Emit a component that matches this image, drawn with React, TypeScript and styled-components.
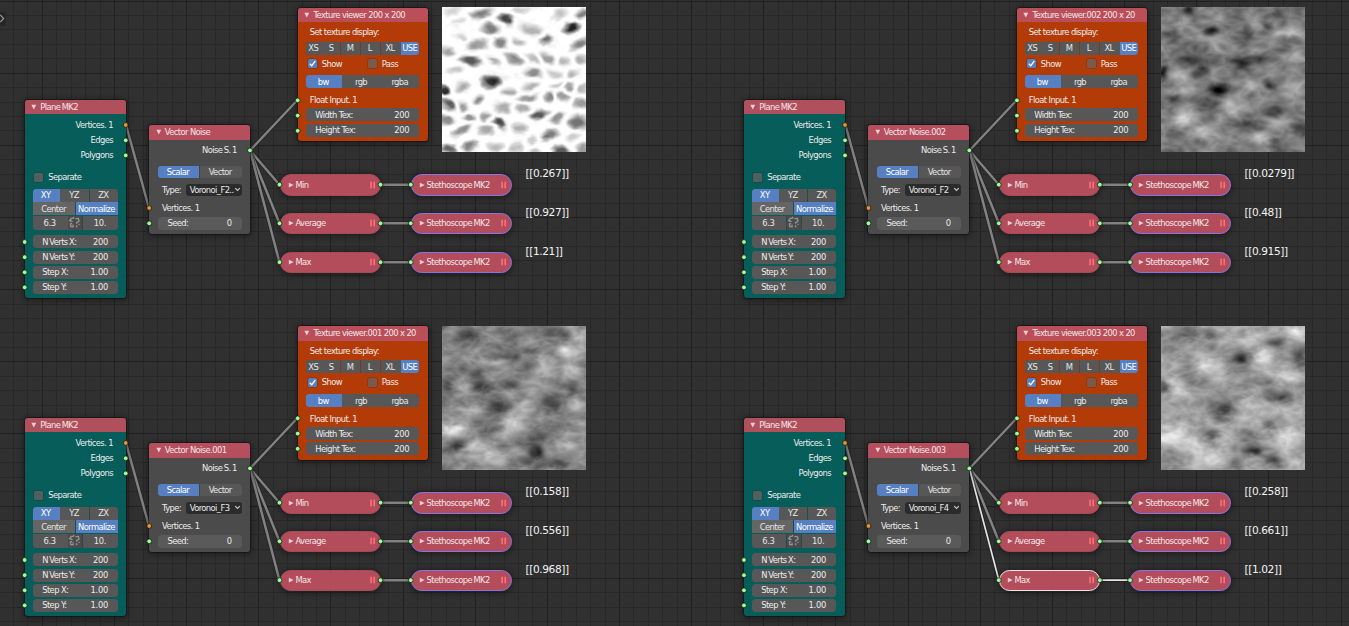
import React, { useEffect, useRef } from 'react';
import styled, { createGlobalStyle, css } from 'styled-components';

const GlobalStyle = createGlobalStyle`
  html, body { margin: 0; padding: 0; background: #303030; overflow: hidden; }
  * { box-sizing: border-box; }
`;

const RED = 'rgba(187, 79, 94, 0.95)';
const GREY = '#575757';
const BLUE = '#5680c2';
const GREEN = '#9dfd9b';
const ORANGE = '#ea9331';

const Editor = styled.main`
  position: relative;
  width: 1349px;
  height: 626px;
  overflow: hidden;
  background: #303030;
  color: #ececec;
  font: 8.4px/12px "DejaVu Sans", sans-serif;
  letter-spacing: -0.6px;
  white-space: pre;
`;

const Layer = styled.svg`
  position: absolute;
  left: 0;
  top: 0;
`;

const Place = styled.section<{ x: number; y: number; w: number }>`
  position: absolute;
  left: ${p => p.x}px;
  top: ${p => p.y}px;
  width: ${p => p.w}px;
`;

const NodeFrame = styled(Place)<{ h: number; tone: string }>`
  height: ${p => p.h}px;
  display: flex;
  flex-direction: column;
  border-radius: 3px;
  overflow: hidden;
  background: ${p => p.tone};
  box-shadow: 0 0 0 0.7px rgba(18, 18, 18, 0.75), 0 1px 6px 1px rgba(0, 0, 0, 0.45);
`;

const NodeHeader = styled.header`
  height: 14.4px;
  flex: none;
  display: flex;
  align-items: center;
  gap: 3px;
  padding-left: 6.6px;
  background: ${RED};
  color: #f4e6e8;
`;

const NodeBody = styled.div<{ left: number; right: number; top: number }>`
  display: flex;
  flex-direction: column;
  padding: ${p => p.top}px ${p => p.right}px 0 ${p => p.left}px;
`;

const Line = styled.div<{ h?: number; mt?: number; indent?: number; end?: number }>`
  height: ${p => p.h ?? 12}px;
  margin-top: ${p => p.mt ?? 0}px;
  padding-left: ${p => p.indent ?? 0}px;
  display: flex;
  align-items: center;
  ${p => p.end !== undefined && css`justify-content: flex-end; padding-right: ${p.end}px;`}
`;

const Segments = styled.div<{ mt?: number; h?: number; radius?: string }>`
  height: ${p => p.h ?? 13}px;
  margin-top: ${p => p.mt ?? 0}px;
  display: flex;
  gap: 0.7px;
  border-radius: ${p => p.radius ?? '3px'};
  overflow: hidden;
  background: rgba(60, 60, 60, 0.5);
`;

const Segment = styled.div<{ w?: number; on?: boolean; tone?: string }>`
  flex: ${p => (p.w ? `0 0 ${p.w}px` : '1 1 0')};
  display: flex;
  align-items: center;
  justify-content: center;
  padding-right: 1px;
  background: ${p => (p.on ? BLUE : p.tone ?? GREY)};
  color: ${p => (p.on ? '#fff' : '#e6e6e6')};
`;

const NumberField = styled.div<{ mt?: number; tone?: string; end?: number }>`
  height: 13px;
  margin-top: ${p => p.mt ?? 2.1}px;
  padding: 0 ${p => p.end ?? 10}px 0 9.5px;
  display: flex;
  align-items: center;
  justify-content: space-between;
  border-radius: 3.5px;
  background: ${p => p.tone ?? GREY};
`;

const Digits = styled.span`
  letter-spacing: -0.3px;
`;

const Tight = styled.span`
  word-spacing: -0.6px;
`;

const Box = styled.span<{ tone: string }>`
  width: 9px;
  height: 9px;
  flex: none;
  display: flex;
  border-radius: 1.5px;
  background: ${p => p.tone};
  box-shadow: 0 0 0 0.5px rgba(30, 30, 30, 0.4);
`;

const CheckLabel = styled.span<{ w?: number }>`
  width: ${p => (p.w ? `${p.w}px` : 'auto')};
  margin-left: 5px;
`;

const Dropdown = styled.div`
  width: 56px;
  height: 12.5px;
  padding: 0 1px 0 4px;
  margin-left: auto;
  display: flex;
  align-items: center;
  justify-content: space-between;
  border-radius: 3px;
  background: #2b2b2b;
`;

const Pill = styled(Place)<{ ring: string }>`
  height: 21.5px;
  padding: 0 3.6px 0 7.3px;
  display: flex;
  align-items: center;
  border-radius: 11px;
  background: ${RED};
  color: #f4e6e8;
  border: 1px solid ${p => p.ring};
  box-shadow: 0 1px 6px 1px rgba(0, 0, 0, 0.4);
`;

const PillTitle = styled.span`
  flex: 1;
  margin-left: 1.6px;
  word-spacing: -0.6px;
`;

const Reading = styled(Place)`
  color: #f2f2f2;
  font-size: 10.6px;
  line-height: 14px;
  letter-spacing: -0.4px;
`;

const Picture = styled.canvas`
  position: absolute;
  width: 144px;
`;

const Down = () => (
  <svg width="6" height="6" viewBox="0 0 6 6"><path d="M.4 .8h4.800L2.800 5.600z" fill="#eed0d4" /></svg>
);
const Right = () => (
  <svg width="6" height="6" viewBox="0 0 6 6"><path d="M.8 .8v4.600L5.600 3.100z" fill="#eed0d4" /></svg>
);
const PauseIcon = () => (
  <svg width="6" height="8" viewBox="0 0 6 8"><path d="M.3 .8h1.600v6.400h-1.600zM3.400 .8h1.600v6.400h-1.600z" fill="#ff6f7b" /></svg>
);
const Chevron = () => (
  <svg width="7" height="5" viewBox="0 0 7 5"><path d="M1.200 1.200l2.300 2.300 2.300-2.300" fill="none" stroke="#ccc" strokeWidth="1.100" /></svg>
);
const Tick = () => (
  <svg width="9" height="9" viewBox="0 0 9 9"><path d="M1.7 4.8l2 2L7.3 2" fill="none" stroke="#fff" strokeWidth="1.3" /></svg>
);
const BrokenLink = () => (
  <svg width="13" height="13" viewBox="0 0 13 13" fill="none" stroke="#929292" strokeWidth="1.4">
    <path d="M5.800 2.400H3L2.400 5l2.200.6M4 7.400L2.400 8l.4 2.600 3 .2M7.400 2.600l3-.2.6 2.800-2.400 1.400v1.200M8.600 9.200v2M5.600 .8v1.400M1 4l1 .8M5 8.600v1.200M11.500 8l-1 .8" />
  </svg>
);

type Blob = [number, number, number, number, number];

const cells: Blob[] = [
  [10, 3, 9, 4, 40], [40, 6, 10, 6, 110], [65, 12, 8, 7, 165], [47, 20, 8, 6, 120], [15, 13, 7, 3, 30],
  [75, 2, 9, 3, 45], [88, 22, 12, 6, 70], [118, 6, 7, 6, 50], [129, 19, 8, 6, 205], [138, 6, 7, 6, 115],
  [101, 31, 7, 6, 125], [137, 36, 8, 5, 115], [56, 34, 8, 6, 115], [35, 37, 11, 6, 85], [75, 33, 9, 4, 65],
  [20, 30, 6, 3, 40], [5, 43, 7, 5, 85], [29, 52, 11, 6, 155], [48, 52, 7, 4, 70], [71, 51, 10, 5, 105],
  [90, 50, 7, 5, 60], [106, 51, 8, 5, 90], [120, 53, 7, 5, 65], [138, 51, 6, 5, 75], [13, 61, 8, 4, 50],
  [91, 64, 9, 6, 105], [111, 66, 8, 5, 50], [128, 67, 7, 4, 55], [47, 74, 9, 6, 190], [2, 82, 6, 5, 190],
  [18, 79, 6, 5, 75], [67, 83, 8, 4, 80], [88, 78, 7, 6, 70], [113, 76, 6, 4, 50], [126, 78, 7, 6, 80],
  [140, 80, 6, 5, 65], [35, 91, 6, 5, 110], [84, 89, 10, 5, 90], [107, 88, 6, 5, 100], [120, 88, 7, 5, 85],
  [138, 95, 7, 6, 90], [5, 96, 9, 7, 145], [19, 99, 8, 6, 90], [60, 99, 8, 6, 75], [79, 100, 8, 5, 70],
  [95, 106, 9, 6, 155], [116, 109, 9, 5, 95], [135, 113, 9, 8, 130], [4, 111, 8, 5, 105], [26, 109, 7, 5, 100],
  [43, 108, 7, 5, 90], [57, 114, 8, 6, 165], [75, 119, 7, 6, 70], [19, 121, 9, 5, 100], [42, 121, 8, 5, 80],
  [105, 126, 9, 6, 120], [90, 131, 6, 5, 45], [130, 128, 7, 4, 45], [7, 141, 8, 5, 130], [27, 137, 8, 5, 110],
  [51, 138, 8, 5, 65], [72, 140, 9, 5, 50], [93, 142, 6, 4, 55], [118, 142, 8, 5, 150], [139, 140, 7, 6, 90],
];

const fields: Blob[][] = [
  cells,
  [
    [27, 2, 6, 5, -80], [51, 23, 10, 4, -85], [106, 19, 6, 5, -65], [77, 53, 10, 6, -95], [97, 51, 8, 5, -70],
    [2, 63, 5, 7, -95], [40, 63, 8, 7, -75], [30, 50, 15, 5, -50], [56, 81, 12, 5, -100], [107, 77, 6, 5, -60],
    [12, 91, 8, 4, -75], [85, 116, 11, 6, -70], [51, 98, 13, 7, -40], [115, 103, 14, 6, -45], [138, 118, 8, 8, -60],
    [115, 138, 9, 7, -65], [118, 5, 8, 6, -60], [10, 124, 9, 6, -40], [84, 27, 5, 12, -45], [9, 30, 9, 7, -35],
    [55, 38, 9, 7, 35], [93, 21, 12, 6, 40], [130, 25, 14, 4, 60], [136, 49, 10, 6, 50], [21, 17, 13, 7, 30],
    [88, 79, 15, 7, 50], [132, 78, 9, 7, 35], [20, 110, 10, 13, 75], [72, 99, 11, 8, 60], [44, 123, 16, 8, 55],
    [97, 128, 13, 8, 55], [20, 67, 13, 6, 35], [27, 81, 10, 6, 30], [137, 134, 12, 8, 25], [112, 116, 13, 7, 30],
  ],
  [
    [71, 31, 15, 7, -65], [39, 59, 9, 5, -90], [34, 48, 7, 6, -60], [58, 82, 11, 8, -65], [93, 125, 8, 8, -95],
    [115, 137, 15, 7, -75], [14, 119, 8, 6, -75], [108, 77, 11, 8, -55], [27, 7, 14, 7, -55], [111, 8, 14, 7, -50],
    [4, 60, 7, 8, -60], [132, 62, 10, 7, -50], [65, 58, 12, 6, -45], [88, 24, 12, 4, -40], [80, 136, 12, 6, -40],
    [9, 104, 15, 6, 95], [29, 118, 10, 7, 60], [51, 36, 13, 5, 65], [103, 37, 10, 10, 65], [124, 26, 12, 6, 65],
    [132, 45, 9, 7, 50], [72, 98, 10, 11, 65], [46, 130, 16, 9, 60], [125, 117, 12, 10, 50], [133, 79, 14, 6, 55],
    [31, 84, 13, 6, 35], [10, 5, 7, 8, 40], [140, 10, 7, 6, 45], [24, 62, 10, 8, 30], [82, 80, 10, 7, 45],
    [45, 98, 15, 9, -30], [85, 110, 13, 9, -35], [115, 102, 12, 7, -35], [60, 14, 13, 8, -15], [12, 28, 13, 8, -15],
  ],
  [
    [79, 31, 10, 7, -95], [138, 29, 8, 9, -80], [91, 124, 10, 5, -105], [110, 133, 10, 6, -75], [107, 97, 6, 4, -75],
    [49, 107, 9, 5, -65], [2, 59, 6, 7, -80], [117, 70, 15, 6, -75], [25, 6, 12, 7, -65], [49, 7, 10, 7, -60],
    [61, 82, 13, 10, -70], [12, 25, 15, 8, -40], [115, 15, 14, 6, -55], [105, 56, 13, 5, -40], [73, 45, 13, 6, -35],
    [48, 40, 12, 7, 55], [102, 31, 9, 9, 60], [11, 108, 14, 8, 80], [32, 120, 12, 8, 50], [47, 132, 17, 9, 60],
    [85, 77, 12, 8, 45], [130, 50, 10, 6, 45], [94, 10, 12, 8, 40], [136, 7, 9, 7, 45], [125, 111, 15, 13, 50],
    [68, 109, 10, 9, 30], [130, 87, 12, 7, 35], [12, 127, 12, 8, -25], [82, 108, 14, 8, -40], [77, 137, 11, 8, -45],
    [38, 58, 18, 8, -15], [28, 70, 10, 6, 35], [15, 60, 8, 12, 35], [80, 58, 15, 8, -25], [137, 135, 10, 6, 15],
  ],
];

const hash = (x: number, y: number, s: number) => {
  const v = Math.sin(x * 127.1 + y * 311.7 + s * 74.7) * 43758.5453;
  return v - Math.floor(v);
};

// Sorted distances to the feature points of a horizontally stretched lattice.
function cellular(x: number, y: number, sx: number, sy: number, seed: number) {
  const u = x / sx;
  const v = y / sy;
  const d: number[] = [];
  for (let j = -1; j <= 1; j++)
    for (let i = -1; i <= 1; i++) {
      const cx = Math.floor(u) + i;
      const cy = Math.floor(v) + j;
      d.push(Math.hypot(cx + hash(cx, cy, seed) - u, cy + hash(cx, cy, seed + 9) - v));
    }
  d.sort((a, b) => a - b);
  return d;
}

function paint(ctx: CanvasRenderingContext2D, kind: number) {
  const size = 144;
  const out = ctx.createImageData(size, size);
  const base = [255, 134, 146, 170][kind];
  for (let y = 0; y < size; y++)
    for (let x = 0; x < size; x++) {
      const n1 = cellular(x + y * 0.3, y - x * 0.15, 20, 12, kind);
      const n2 = cellular(x - y * 0.5, y + x * 0.25, 15, 9, kind + 3);
      let v = base;
      if (kind === 0) {
        const wx = x + (n1[1] - 0.8) * 7;
        const wy = y + (n2[1] - 0.8) * 4;
        let a = 9, b = 9, dark = 0;
        cells.forEach(([cx, cy, rx, ry, k], i) => {
          const slope = (hash(i, 3, 1) - 0.5) * 0.8;
          const d = Math.hypot((wx - cx) / (rx * 1.08), (wy - cy + (wx - cx) * slope) / ry);
          if (d < a) { b = a; a = d; dark = k; } else if (d < b) b = d;
        });
        const edge = Math.min(1, Math.max(0, (b - a) * 0.95 - 0.1));
        const body = Math.min(1, Math.max(0, 1.35 - a));
        const streak = (n2[2] - 0.9) * 40;
        v = 255 - dark * 1.08 * edge * body - Math.max(0, streak) * edge;
      } else {
        const wx = x + (n1[2] - 1) * 5;
        const wy = y + (n2[2] - 1) * 3.5;
        for (const [cx, cy, rx, ry, k] of fields[kind]) {
          const q = ((wx - cx) / rx) ** 2 + ((wy - cy) / ry) ** 2;
          if (q < 9) v += k * Math.exp(-q);
        }
        const m = kind > 1 ? 2 : 1;
        const mean = m === 1 ? 0.78 : 1;
        v += (n1[m] - mean) * 60 + (n2[m] - mean) * 50;
      }
      const o = (y * size + x) * 4;
      out.data[o] = out.data[o + 1] = out.data[o + 2] = v;
      out.data[o + 3] = 255;
    }
  ctx.putImageData(out, 0, 0);
}

function Texture({ kind, x, y, h }: { kind: number; x: number; y: number; h: number }) {
  const ref = useRef<HTMLCanvasElement>(null);
  useEffect(() => {
    const ctx = ref.current?.getContext('2d');
    if (ctx) paint(ctx, kind);
  }, [kind]);
  return <Picture ref={ref} width={144} height={144} style={{ left: x, top: y, height: h }} />;
}

interface Graph {
  x: number;
  y: number;
  kind: number;
  noise: string;
  viewer: string;
  type: string;
  values: string[];
  selected?: boolean;
}

const graphs: Graph[] = [
  { x: 0, y: 0, kind: 0, noise: 'Vector Noise', viewer: 'Texture viewer 200 x 200', type: 'Voronoi_F2..', values: ['[[0.267]]', '[[0.927]]', '[[1.21]]'] },
  { x: 719, y: 0, kind: 1, noise: 'Vector Noise.002', viewer: 'Texture viewer.002 200 x 20', type: 'Voronoi_F2', values: ['[[0.0279]]', '[[0.48]]', '[[0.915]]'] },
  { x: 0, y: 318, kind: 2, noise: 'Vector Noise.001', viewer: 'Texture viewer.001 200 x 20', type: 'Voronoi_F3', values: ['[[0.158]]', '[[0.556]]', '[[0.968]]'] },
  { x: 719, y: 318, kind: 3, noise: 'Vector Noise.003', viewer: 'Texture viewer.003 200 x 20', type: 'Voronoi_F4', values: ['[[0.258]]', '[[0.661]]', '[[1.02]]'], selected: true },
];

const rows = [184.7, 223.3, 262.2];
const names = ['Min', 'Average', 'Max'];

function PlaneNode({ x, y }: { x: number; y: number }) {
  const shift = x ? 1 : 0;
  return (
    <NodeFrame x={x + 24.7} y={y + 100} w={101.3} h={197.7} tone="rgba(3, 96, 92, 0.94)">
      <NodeHeader><Down /><Tight>Plane MK2</Tight></NodeHeader>
      <NodeBody left={8} right={8 + shift} top={4.8}>
        <Line end={5}>Vertices. 1</Line>
        <Line end={5} mt={3}>Edges</Line>
        <Line end={5} mt={3}>Polygons</Line>
        <Line mt={10} indent={1.5}><Box tone="#535f5e" /><CheckLabel>Separate</CheckLabel></Line>
        <Segments mt={6} h={12.6} radius="3px 3px 0 0">
          <Segment on w={27}>XY</Segment><Segment>YZ</Segment><Segment>ZX</Segment>
        </Segments>
        <Segments mt={0.6} radius="0">
          <Segment tone="#656565">Center</Segment><Segment on w={42}>Normalize</Segment>
        </Segments>
        <Segments mt={0.6} h={14} radius="0 0 3px 3px">
          <Segment><Digits>6.3</Digits></Segment><Segment w={13} tone="#4b4b4b"><BrokenLink /></Segment><Segment><Digits>10.</Digits></Segment>
        </Segments>
        <NumberField mt={5.5}><Tight>N Verts X:</Tight><Digits>200</Digits></NumberField>
        <NumberField><Tight>N Verts Y:</Tight><Digits>200</Digits></NumberField>
        <NumberField>Step X:<Digits>1.00</Digits></NumberField>
        <NumberField>Step Y:<Digits>1.00</Digits></NumberField>
      </NodeBody>
    </NodeFrame>
  );
}

function NoiseNode({ x, y, title, type }: { x: number; y: number; title: string; type: string }) {
  return (
    <NodeFrame x={x + 149.2} y={y + 125.3} w={101} h={108.5} tone="rgba(76, 76, 76, 0.97)">
      <NodeHeader><Down />{title}</NodeHeader>
      <NodeBody left={8.8} right={8.5} top={4.3}>
        <Line end={5}><Tight>Noise S. 1</Tight></Line>
        <Segments mt={10} h={12}><Segment on w={41}>Scalar</Segment><Segment>Vector</Segment></Segments>
        <Line mt={6} indent={4}>Type:<Dropdown>{type}<Chevron /></Dropdown></Line>
        <Line mt={6} indent={4}>Vertices. 1</Line>
        <NumberField mt={2.6} tone="#5a5a5a">Seed:<Digits>0</Digits></NumberField>
      </NodeBody>
    </NodeFrame>
  );
}

function ViewerNode({ x, y, title }: { x: number; y: number; title: string }) {
  return (
    <NodeFrame x={x + 297.8} y={y} w={130} h={133.7} tone="rgba(184, 59, 5, 0.96)">
      <NodeHeader><Down />{title}</NodeHeader>
      <NodeBody left={8} right={8.5} top={4}>
        <Line indent={4}>Set texture display:</Line>
        <Segments mt={3.6}>
          <Segment w={16}>XS</Segment><Segment w={18}>S</Segment><Segment w={19}>M</Segment>
          <Segment w={19}>L</Segment><Segment>XL</Segment><Segment on w={18}>USE</Segment>
        </Segments>
        <Line mt={3.2} indent={2}>
          <Box tone={BLUE}><Tick /></Box><CheckLabel w={46}>Show</CheckLabel>
          <Box tone="#7b5a4c" /><CheckLabel>Pass</CheckLabel>
        </Line>
        <Segments mt={5.6}><Segment on w={36}>bw</Segment><Segment>rgb</Segment><Segment>rgba</Segment></Segments>
        <Line mt={5.6} indent={4}>Float Input. 1</Line>
        <NumberField mt={2.4}>Width Tex:<Digits>200</Digits></NumberField>
        <NumberField>Height Tex:<Digits>200</Digits></NumberField>
      </NodeBody>
    </NodeFrame>
  );
}

function Wires({ g }: { g: Graph }) {
  const links = [
    [126, 125, 149, 208],
    [250, 150.5, 297.5, 100],
    ...rows.map(r => [250, 150.5, 279.5, r]),
    ...rows.map(r => [381, r, 411, r]),
  ];
  return (
    <g transform={`translate(${g.x + (g.x ? 0.4 : 0)} ${g.y})`} strokeLinecap="round">
      {links.map(([a, b, c, d], i) => {
        const active = g.selected && (i === 4 || i === 7);
        return (
          <g key={i}>
            <path d={`M${a} ${b}L${c} ${d}`} stroke="#1d1d1d" strokeOpacity=".6" strokeWidth="4" />
            <path d={`M${a} ${b}L${c} ${d}`} stroke={active ? '#e4e4e4' : '#828282'} strokeWidth={active ? 1.7 : 2.5} />
          </g>
        );
      })}
    </g>
  );
}

function Sockets({ g }: { g: Graph }) {
  const spots: [number, number, string?][] = [
    [125.7, 125, ORANGE], [125.7, 140.3], [125.7, 155.4],
    [24.7, 242], [24.7, 257.2], [24.7, 272.3], [24.7, 287.4],
    [149.2, 208, ORANGE], [149.2, 223.3], [250, 150.4],
    [297.7, 100.3], [297.7, 115.6], [297.7, 130.8],
    ...rows.flatMap(r => [[279.5, r], [380.5, r], [410.8, r]] as [number, number][]),
  ];
  return (
    <g transform={`translate(${g.x + (g.x ? 0.3 : 0)} ${g.y})`}>
      {spots.map(([x, y, fill], i) => (
        <circle key={i} cx={x} cy={y} r="2.4" fill={fill ?? GREEN} stroke="#142014" strokeWidth=".8" />
      ))}
    </g>
  );
}

function GridLines() {
  const step = 14.43;
  return (
    <Layer width="1349" height="626">
      {Array.from({ length: 95 }, (_, i) => {
        const x = Math.floor(42.3 + (i - 2) * step);
        return <rect key={i} x={x} y="0" width="1" height="626" fill={(i - 2) % 5 === 0 ? '#202020' : '#282828'} />;
      })}
      {Array.from({ length: 44 }, (_, i) => (
        <rect key={i} x="0" y={Math.floor(1 + i * step)} width="1349" height="1" fill={i % 5 === 0 ? '#202020' : '#282828'} />
      ))}
      <path d="M0 12h3a3 3 0 0 1 3 3v8a3 3 0 0 1-3 3h-3z" fill="#262626" />
      <path d="M.3 15l3.400 3.500-3.400 3.500" fill="none" stroke="#999" strokeWidth="1.100" />
    </Layer>
  );
}

export default function App() {
  return (
    <>
      <GlobalStyle />
      <Editor>
        <GridLines />
        <Layer width="1349" height="626">{graphs.map(g => <Wires key={g.kind} g={g} />)}</Layer>
        {graphs.map(g => (
          <React.Fragment key={g.kind}>
            <PlaneNode x={g.x} y={g.y} />
            <NoiseNode x={g.x} y={g.y} title={g.noise} type={g.type} />
            <ViewerNode x={g.x} y={g.y ? 326.3 : 7.7} title={g.viewer} />
            <Texture kind={g.kind} x={g.x + 442} y={g.y ? 326 : 7} h={g.y ? 144 : 145} />
            {rows.map((r, i) => (
              <React.Fragment key={i}>
                <Pill x={g.x + 279.5} y={g.y + r - 10.7} w={101} ring={g.selected && i === 2 ? '#f0e4e4' : '#a64a56'}>
                  <Right /><PillTitle>{names[i]}</PillTitle><PauseIcon />
                </Pill>
                <Pill x={g.x + 410.7} y={g.y + r - 10.7} w={101} ring="#8673e6">
                  <Right /><PillTitle>Stethoscope MK2</PillTitle><PauseIcon />
                </Pill>
                <Reading x={g.x + 525.5} y={g.y + r - 18.5} w={60}>{g.values[i]}</Reading>
              </React.Fragment>
            ))}
          </React.Fragment>
        ))}
        <Layer width="1349" height="626">{graphs.map(g => <Sockets key={g.kind} g={g} />)}</Layer>
      </Editor>
    </>
  );
}
